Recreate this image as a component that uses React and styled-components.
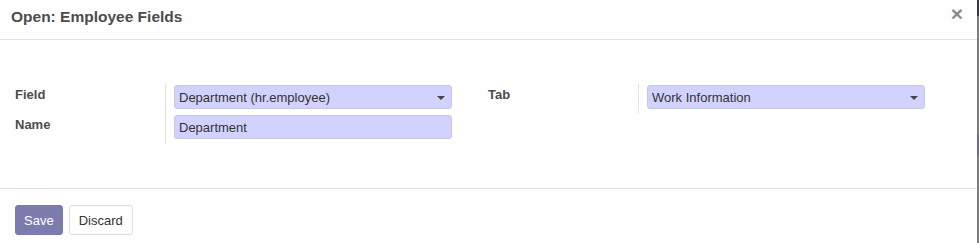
import React from 'react';
import styled, { createGlobalStyle } from 'styled-components';

const GlobalStyle = createGlobalStyle`
  html, body {
    margin: 0;
    padding: 0;
    background: #fff;
  }
  body {
    font-family: "Liberation Sans", Arial, sans-serif;
    font-size: 13px;
    color: #4c4c4c;
  }
`;

const Page = styled.div`
  display: flex;
  width: 979px;
  height: 243px;
  overflow: hidden;
`;

const Modal = styled.div`
  flex: 1;
  display: flex;
  flex-direction: column;
  background: #fff;
`;

const Backdrop = styled.div`
  width: 2px;
  background: linear-gradient(
    to bottom,
    #3b3650 0,
    #3b3650 16px,
    #7d7d7d 16px,
    #7d7d7d 135px,
    #6f6a85 135px,
    #6f6a85 155px,
    #7d7d7d 155px
  );
`;

const Header = styled.div`
  display: flex;
  align-items: center;
  justify-content: space-between;
  height: 40px;
  padding: 0 14px 0 11px;
  border-bottom: 1px solid #e2e2e2;
`;

const Title = styled.h4`
  margin: 0;
  margin-top: -6px;
  font-size: 15.5px;
  font-weight: 700;
  color: #4c4c4c;
`;

const Close = styled.span`
  font-size: 21px;
  font-weight: 700;
  line-height: 1;
  color: #8a8a8a;
  margin-top: -13px;
`;

const Body = styled.div`
  display: flex;
  gap: 14px;
  padding: 44px 15px;
  border-bottom: 1px solid #e2e2e2;
`;

const Group = styled.div`
  width: 459px;
  display: grid;
  grid-template-columns: 150px 1fr;
  align-self: flex-start;
`;

const Labels = styled.div`
  display: flex;
  flex-direction: column;
  gap: 14px;
  padding-top: 3px;
`;

const Label = styled.label`
  font-weight: 700;
  font-size: 13px;
  line-height: 16px;
  color: #4c4c4c;
`;

const Fields = styled.div`
  display: flex;
  flex-direction: column;
  gap: 6px;
  border-left: 1px solid #e2e2e2;
  padding: 1px 22px 5px 8px;
`;

const Input = styled.div`
  position: relative;
  height: 24px;
  box-sizing: border-box;
  display: flex;
  align-items: center;
  padding: 0 4px;
  background: #d2d2ff;
  border: 1px solid #c6c6e6;
  border-radius: 3px;
  font-size: 13px;
  color: #333;
`;

const Caret = styled.span`
  position: absolute;
  right: 6px;
  top: 10px;
  width: 0;
  height: 0;
  border-left: 4px solid transparent;
  border-right: 4px solid transparent;
  border-top: 4px solid #444;
`;

const Footer = styled.div`
  display: flex;
  gap: 6px;
  padding: 16px 15px 8px;
`;

const Button = styled.button`
  height: 30px;
  padding: 0 ${p => (p.$primary ? '8px' : '9px')};
  font-family: "Liberation Sans", Arial, sans-serif;
  font-size: 13px;
  border-radius: 3px;
  cursor: pointer;
  border: 1px solid ${p => (p.$primary ? '#7c7bad' : '#dcdcdc')};
  background: ${p => (p.$primary ? '#7c7bad' : '#fff')};
  color: ${p => (p.$primary ? '#fff' : '#333')};
`;

export default function App() {
  return (
    <Page>
      <GlobalStyle />
      <Modal>
        <Header>
          <Title>Open: Employee Fields</Title>
          <Close>×</Close>
        </Header>
        <Body>
          <Group>
            <Labels>
              <Label>Field</Label>
              <Label>Name</Label>
            </Labels>
            <Fields>
              <Input>
                Department (hr.employee)
                <Caret />
              </Input>
              <Input>Department</Input>
            </Fields>
          </Group>
          <Group>
            <Labels>
              <Label>Tab</Label>
            </Labels>
            <Fields>
              <Input>
                Work Information
                <Caret />
              </Input>
            </Fields>
          </Group>
        </Body>
        <Footer>
          <Button $primary>Save</Button>
          <Button>Discard</Button>
        </Footer>
      </Modal>
      <Backdrop />
    </Page>
  );
}
